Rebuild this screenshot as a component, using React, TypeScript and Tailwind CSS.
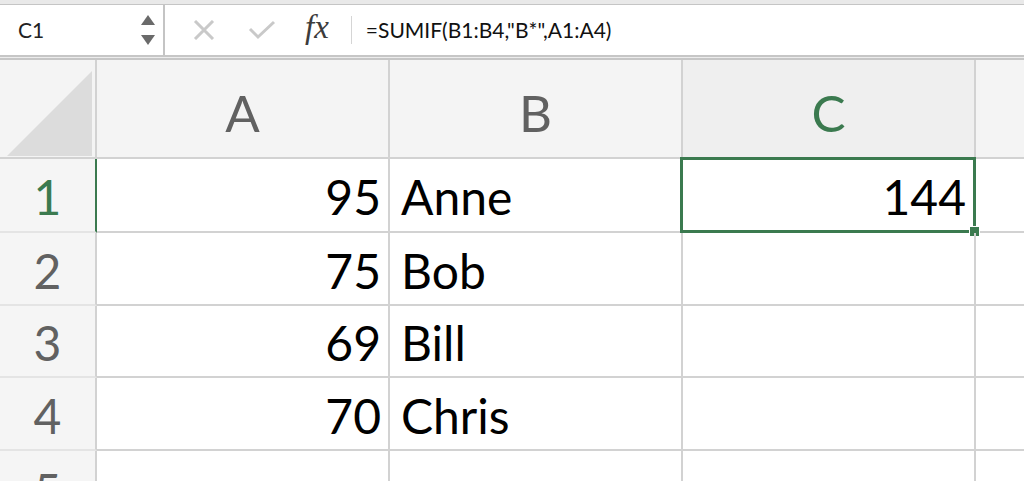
const cols = ["A", "B", "C"];

const rows = [
  { n: 1, a: "95", b: "Anne", c: "144" },
  { n: 2, a: "75", b: "Bob", c: "" },
  { n: 3, a: "69", b: "Bill", c: "" },
  { n: 4, a: "70", b: "Chris", c: "" },
];

const font = { fontFamily: "Lato, 'Liberation Sans', sans-serif" };

function Toolbar() {
  return (
    <div className="flex flex-col shrink-0">
      <div className="h-[5px] bg-[#e9e9e9] border-b border-[#c5c5c5]" />
      <div className="h-[50px] flex items-stretch bg-white">
        <div className="w-[165px] flex items-center justify-between pl-[18px] pr-[8px] border-r-2 border-[#c4c4c4]">
          <span className="text-[21px] text-[#222]">C1</span>
          <div className="flex flex-col items-center gap-[10px]">
            <svg width="14" height="10" viewBox="0 0 14 10">
              <polygon points="7,0 14,10 0,10" fill="#6a6a6a" />
            </svg>
            <svg width="14" height="10" viewBox="0 0 14 10">
              <polygon points="0,0 14,0 7,10" fill="#6a6a6a" />
            </svg>
          </div>
        </div>
        <div className="flex items-center pl-[28px]">
          <svg width="22" height="20" viewBox="0 0 22 20">
            <path d="M2 1 L20 19 M20 1 L2 19" stroke="#c9c9c9" strokeWidth="3" />
          </svg>
          <svg width="28" height="20" viewBox="0 0 28 20" className="ml-[33px]">
            <path d="M2 9 L10 17 L26 2" stroke="#c9c9c9" strokeWidth="3" fill="none" />
          </svg>
          <span
            className="ml-[29px] text-[33px] italic text-[#3c3c3c] leading-none -mt-[6px]"
            style={{ fontFamily: "'Liberation Serif', serif" }}
          >
            fx
          </span>
          <div className="ml-[22px] w-px h-[28px] bg-[#d5d5d5]" />
          <span className="ml-[14px] text-[21px] text-[#111]">=SUMIF(B1:B4,"B*",A1:A4)</span>
        </div>
      </div>
      <div className="h-[5px] border-t-2 border-b-2 border-[#c6c6c6] bg-[#ececec]" />
    </div>
  );
}

function Corner() {
  return (
    <div className="h-[99px] bg-[#f4f4f4] border-r-2 border-b-2 border-[#d2d2d2]">
      <svg width="95" height="97" viewBox="0 0 95 97">
        <polygon points="7,96 92,96 92,11" fill="#dcdcdc" />
      </svg>
    </div>
  );
}

export default function App() {
  return (
    <div className="w-[1024px] h-[481px] overflow-hidden flex flex-col bg-white" style={font}>
      <Toolbar />
      <div className="grid grid-cols-[97px_293px_293px_293px_1fr] grid-rows-[99px_74px_73px_72px_73px_1fr] flex-1">
        <Corner />
        {cols.map((c) => (
          <div
            key={c}
            className={`flex items-center justify-center pt-[10px] text-[51px] border-r-2 border-b-2 border-[#d2d2d2] ${
              c === "C" ? "bg-[#efefef] text-[#3b7a4f]" : "bg-[#f4f4f4] text-[#616161]"
            }`}
          >
            {c}
          </div>
        ))}
        <div className="bg-[#f4f4f4] border-b-2 border-[#d2d2d2]" />
        {rows.map((r) => (
          <Row key={r.n} {...r} />
        ))}
        <div className="bg-[#f5f5f5] border-r-2 border-[#d2d2d2] flex justify-center pt-[16px] text-[48px] text-[#616161] leading-none">
          5
        </div>
        <div className="border-r-2 border-[#d2d2d2]" />
        <div className="border-r-2 border-[#d2d2d2]" />
        <div className="border-r-2 border-[#d2d2d2]" />
        <div />
      </div>
    </div>
  );
}

function Row({ n, a, b, c }: { n: number; a: string; b: string; c: string }) {
  const sel = n === 1;
  return (
    <>
      <div
        className={`flex items-center justify-center pt-[4px] text-[48px] bg-[#f5f5f5] border-b-2 border-[#e4e4e4] border-r-2 ${
          sel ? "text-[#3b7a4f] border-r-[#3b7a4f]" : "text-[#616161] border-r-[#d2d2d2]"
        }`}
      >
        {n}
      </div>
      <div className="flex items-center justify-end pr-[7px] pt-[4px] text-[48px] text-black border-r-2 border-b-2 border-[#d2d2d2]">
        {a}
      </div>
      <div className="flex items-center pl-[11px] pt-[4px] text-[48px] text-black border-r-2 border-b-2 border-[#d2d2d2]">
        {b}
      </div>
      <div className="relative flex items-center justify-end pr-[8px] pt-[4px] text-[48px] text-black border-r-2 border-b-2 border-[#d2d2d2]">
        {c}
        {sel && (
          <>
            <div className="absolute -left-[3px] -top-[2px] -right-[2px] -bottom-[2px] border-[3px] border-[#3b7a4f]" />
            <div className="absolute -right-[6px] -bottom-[6px] w-[11px] h-[11px] bg-[#3b7a4f] border border-white" />
          </>
        )}
      </div>
      <div className="border-b-2 border-[#d2d2d2]" />
    </>
  );
}
